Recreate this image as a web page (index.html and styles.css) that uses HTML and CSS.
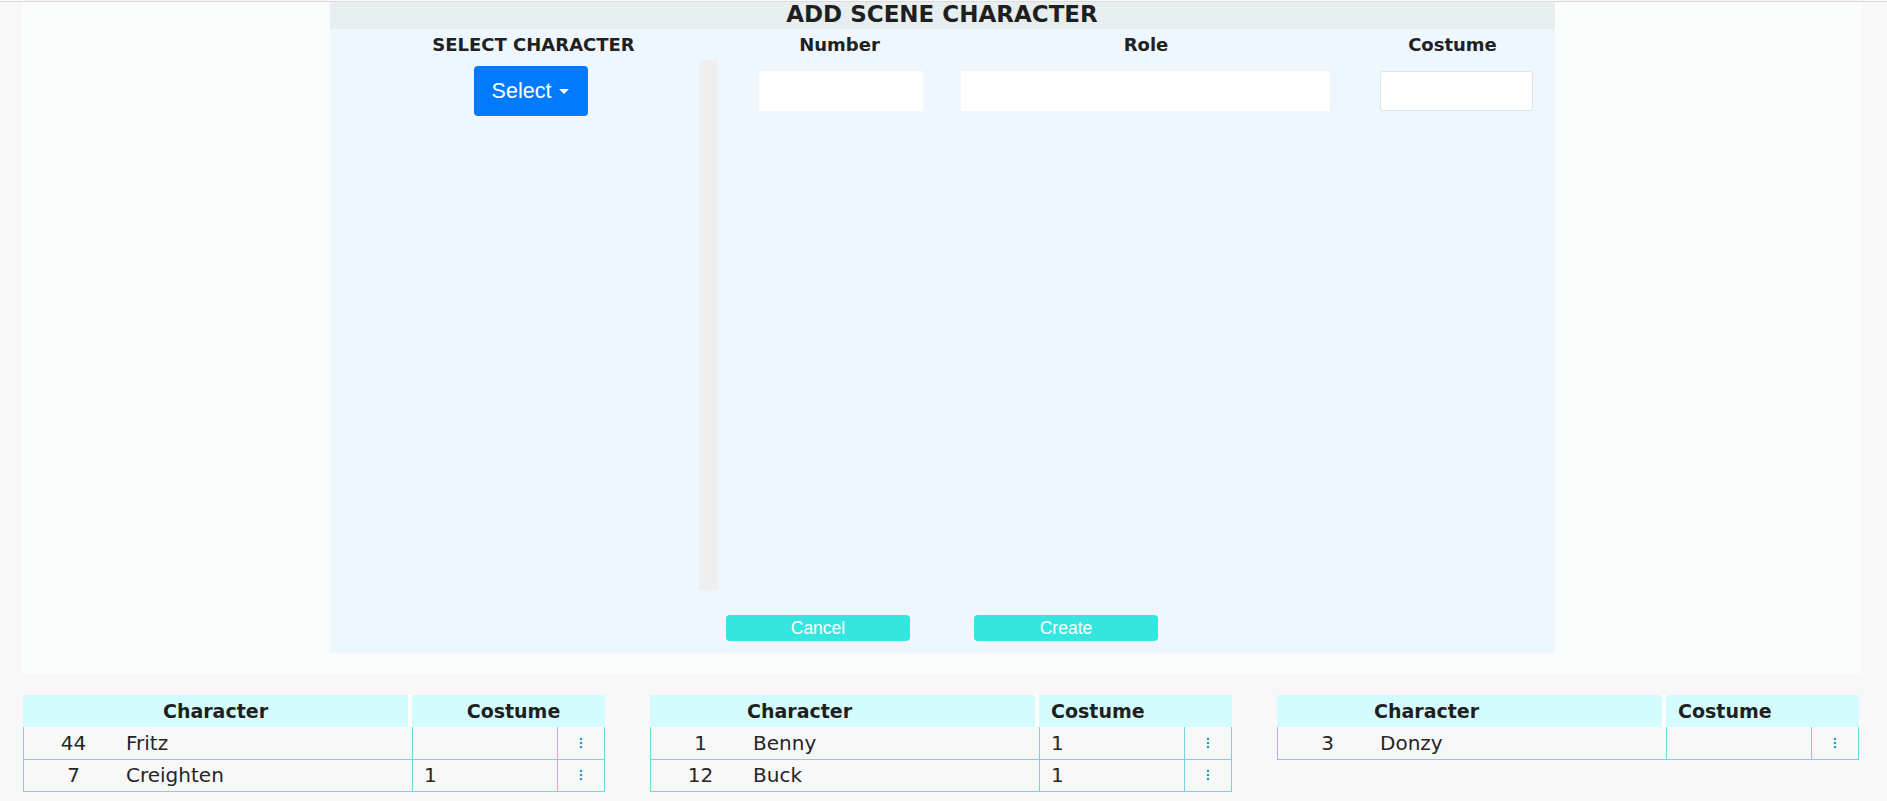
FILE: index.html
```html
<!DOCTYPE html>
<html lang="en">
<head>
<meta charset="utf-8">
<title>Add Scene Character</title>
<link rel="stylesheet" href="styles.css">
</head>
<body>
<div class="app">
  <main class="panel">
    <section class="modal">
      <header class="modal-title">ADD SCENE CHARACTER</header>
      <div class="modal-body">
        <div class="select-col">
          <h3 class="col-head select-head">SELECT CHARACTER</h3>
          <button class="btn-select" type="button">Select<span class="caret"></span></button>
          <div class="scroll-bar"></div>
        </div>
        <div class="fields">
          <div class="field field-number">
            <h3 class="col-head">Number</h3>
            <input class="inp" type="text">
          </div>
          <div class="field field-role">
            <h3 class="col-head">Role</h3>
            <input class="inp" type="text">
          </div>
          <div class="field field-costume">
            <h3 class="col-head">Costume</h3>
            <input class="inp inp-bordered" type="text">
          </div>
        </div>
      </div>
      <footer class="modal-foot">
        <button class="btn-act" type="button">Cancel</button>
        <button class="btn-act" type="button">Create</button>
      </footer>
    </section>
  </main>

  <div class="tables">
    <div class="ctable ctable-first">
      <div class="th th-char">Character</div>
      <div class="th th-cost">Costume</div>
      <div class="td td-num">44</div><div class="td td-name">Fritz</div><div class="td td-cost"></div><div class="td td-menu"><svg width="4" height="12" viewBox="0 0 4 12"><circle cx="2" cy="2" r="1.3"/><circle cx="2" cy="6" r="1.3"/><circle cx="2" cy="10" r="1.3"/></svg></div>
      <div class="td td-num">7</div><div class="td td-name">Creighten</div><div class="td td-cost">1</div><div class="td td-menu"><svg width="4" height="12" viewBox="0 0 4 12"><circle cx="2" cy="2" r="1.3"/><circle cx="2" cy="6" r="1.3"/><circle cx="2" cy="10" r="1.3"/></svg></div>
    </div>
    <div class="ctable">
      <div class="th th-char">Character</div>
      <div class="th th-cost">Costume</div>
      <div class="td td-num">1</div><div class="td td-name">Benny</div><div class="td td-cost">1</div><div class="td td-menu"><svg width="4" height="12" viewBox="0 0 4 12"><circle cx="2" cy="2" r="1.3"/><circle cx="2" cy="6" r="1.3"/><circle cx="2" cy="10" r="1.3"/></svg></div>
      <div class="td td-num">12</div><div class="td td-name">Buck</div><div class="td td-cost">1</div><div class="td td-menu"><svg width="4" height="12" viewBox="0 0 4 12"><circle cx="2" cy="2" r="1.3"/><circle cx="2" cy="6" r="1.3"/><circle cx="2" cy="10" r="1.3"/></svg></div>
    </div>
    <div class="ctable">
      <div class="th th-char">Character</div>
      <div class="th th-cost">Costume</div>
      <div class="td td-num">3</div><div class="td td-name">Donzy</div><div class="td td-cost"></div><div class="td td-menu"><svg width="4" height="12" viewBox="0 0 4 12"><circle cx="2" cy="2" r="1.3"/><circle cx="2" cy="6" r="1.3"/><circle cx="2" cy="10" r="1.3"/></svg></div>
    </div>
  </div>
</div>
</body>
</html>
```

FILE: styles.css
```css
* { box-sizing: border-box; }

html, body {
  margin: 0;
  padding: 0;
}

body {
  background: #f8f8f8;
  font-family: "DejaVu Sans", Inter, sans-serif;
  color: #262626;
  padding-top: 1px;
}

.app {
  border-top: 1px solid #dcdcdc;
}

.panel {
  background: #fbfdfd;
  margin: 0 25px 0 22px;
  padding-bottom: 21px;
}

.modal {
  width: 1225px;
  margin: 0 auto;
  background: #eef6fe;
}

.modal-title {
  height: 27px;
  background: #e6eef0;
  text-align: center;
  font-weight: 700;
  font-size: 23px;
  line-height: 25px;
  color: #1f1f1f;
}

.modal-body {
  display: grid;
  grid-template-columns: 408px 1fr;
  padding-top: 4px;
}

.col-head {
  margin: 0;
  font-size: 18px;
  line-height: 23px;
  font-weight: 700;
  text-align: center;
  color: #212121;
}

.select-col {
  display: grid;
  grid-template-columns: 369px 19px 20px;
  grid-template-rows: auto auto;
  align-items: start;
}

.select-head {
  grid-column: 1 / -1;
  grid-row: 1;
}

.btn-select {
  grid-column: 1 / -1;
  grid-row: 2;
  justify-self: center;
  margin: 10px 6px 0 0;
  height: 50px;
  width: 114px;
  border: none;
  border-radius: 4px;
  background: #007bff;
  color: #fff;
  font-family: "Liberation Sans", Arial, sans-serif;
  font-size: 21.5px;
  padding: 0;
  display: flex;
  align-items: center;
  justify-content: center;
  gap: 8px;
}

.caret {
  width: 0;
  height: 0;
  border-left: 5px solid transparent;
  border-right: 5px solid transparent;
  border-top: 5px solid #fff;
  margin-top: 1px;
}

.scroll-bar {
  grid-column: 2;
  grid-row: 2;
  margin-top: 4px;
  height: 530px;
  background: #efefef;
}

.fields {
  display: grid;
  grid-template-columns: 204px 409px 204px;
  align-items: start;
}

.field {
  display: flex;
  flex-direction: column;
}

.inp {
  margin-top: 15px;
  height: 40px;
  border: none;
  background: #fff;
  font: inherit;
  outline: none;
}

.field-number .inp { margin-left: 21px; margin-right: 19px; }
.field-role .inp { margin-left: 19px; margin-right: 21px; }
.field-costume .inp { margin-left: 29px; margin-right: 22px; }

.inp-bordered {
  border: 1px solid #dde3e8;
  border-radius: 3px;
}

.modal-foot {
  display: flex;
  justify-content: center;
  gap: 64px;
  padding: 25px 0 12px;
}

.btn-act {
  width: 184px;
  height: 26px;
  border: none;
  border-radius: 4px;
  background: #35e5e0;
  color: #fff;
  font-family: "Liberation Sans", Arial, sans-serif;
  font-size: 17.5px;
  padding: 0;
}

/* tables */
.tables {
  display: flex;
  gap: 45px;
  padding: 21px 0 0 23px;
}

.ctable {
  width: 582px;
  display: grid;
  grid-template-columns: 100px 1fr 145px 48px;
  grid-template-rows: 32px;
  grid-auto-rows: 32.5px;
  align-content: start;
  font-size: 20px;
}

.th {
  background: #d4fbfd;
  font-weight: 700;
  display: flex;
  align-items: center;
  font-size: 19px;
  color: #1f1f1f;
}

.th-char {
  grid-column: 1 / 3;
  border-right: 4px solid #fff;
  padding-left: 97px;
}

.th-cost {
  grid-column: 3 / 5;
  padding-left: 12px;
}

.ctable-first .th-char { padding-left: 0; justify-content: center; }
.ctable-first .th-cost { padding-left: 10px; justify-content: center; }

.td {
  display: flex;
  align-items: center;
  border-bottom: 1px solid #76d6df;
  background: #f8f8f8;
}

.td-num {
  justify-content: center;
  border-left: 1px solid #76d6df;
}

.td-name {
  padding-left: 3px;
}

.td-cost {
  border-left: 1px solid #76d6df;
  padding-left: 11px;
}

.td-menu {
  border-left: 1px solid #76d6df;
  border-right: 1px solid #76d6df;
  justify-content: center;
}

.td-menu svg { fill: #1aa6b4; }
```
